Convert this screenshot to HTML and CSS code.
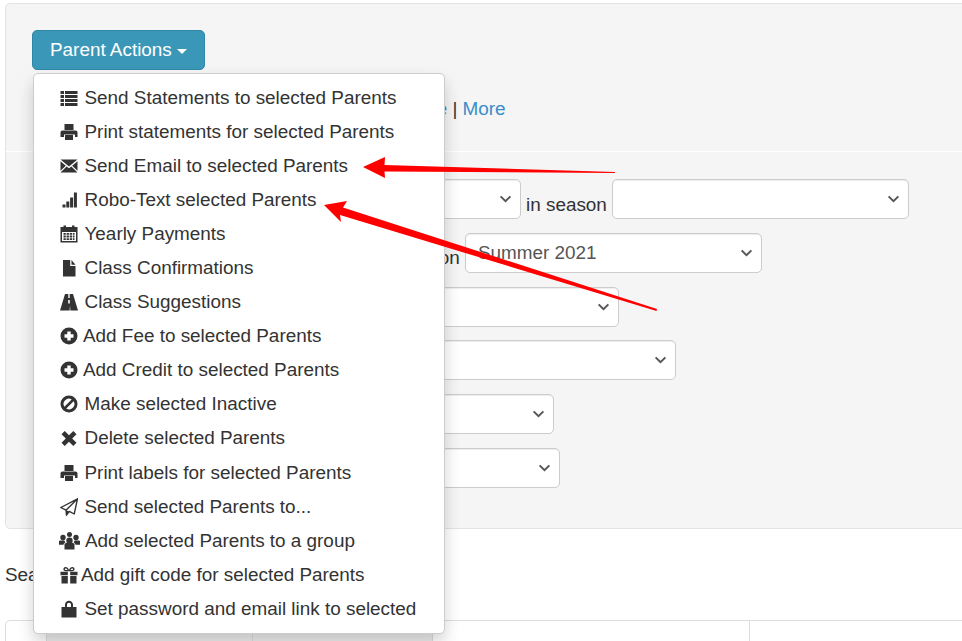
FILE: index.html
```html
<!DOCTYPE html>
<html lang="en">
<head>
  <meta charset="UTF-8" />
  <meta name="viewport" content="width=device-width, initial-scale=1.0" />
  <title>Parents</title>
  <link rel="stylesheet" href="styles.css">
</head>
<body>
  <div class="page">
    <div class="well">
      <div class="actions">
        <button class="btn-actions">Parent Actions <span class="caret"></span></button>

        <ul class="dropdown">
          <li><svg class="icon" viewBox="0 0 18 18"><path d="M.5 2h3.500v3H.5zM5 2h12.500v3H5zM.5 6h3.500v3H.5zM5 6h12.500v3H5zM.5 10h3.500v3H.5zM5 10h12.500v3H5zM.5 14h3.500v3H.5zM5 14h12.500v3H5z"/></svg>Send Statements to selected Parents</li>
          <li><svg class="icon" viewBox="0 0 18 18"><path d="M4.500 1h9v6h-9zM2.500 7.500h13c1 0 2 .8 2 2V14h-2.500v-2.500H4V14H.5V9.500c0-1.200 1-2 2-2zM5 12h8v5H5z"/></svg>Print statements for selected Parents</li>
          <li><svg class="icon" viewBox="0 0 18 18"><path d="M.5 2.500h17L9 9.500zM.5 4.200l5.300 4.500-5.300 5zM17.500 4.200l-5.300 4.500 5.300 5zM6.600 9.400 9 11.300l2.400-1.900 6.100 6H.5z"/></svg>Send Email to selected Parents</li>
          <li><svg class="icon" viewBox="0 0 18 18"><path d="M2.500 13.500h3V16.500h-3zM6.300 10.500h3v6h-3zM10.100 6.500h3v10h-3zM13.900 1.500h3v15h-3z"/></svg>Robo-Text selected Parents</li>
          <li><svg class="icon" viewBox="0 0 18 18"><path fill-rule="evenodd" d="M3.500.5h2.500V2h6V.5h2.500V2h3v15.500H.5V2h3zM2 7v9h14V7zM3.500 8h2.300v1.800H3.500zM6.600 8h2.300v1.800H6.600zM9.700 8H12v1.800H9.700zM12.800 8h1.700v1.800h-1.700zM3.500 10.600h2.300v1.800H3.500zM6.600 10.600h2.300v1.800H6.600zM9.700 10.600H12v1.800H9.700zM12.800 10.600h1.700v1.800h-1.700zM3.500 13.200h2.300V15H3.500zM6.600 13.200h2.300V15H6.600zM9.700 13.200H12V15H9.700zM12.800 13.200h1.700V15h-1.700z"/></svg>Yearly Payments</li>
          <li><svg class="icon" viewBox="0 0 18 18"><path d="M3 1h7.200v6H15.500v10.500H3zM11.500 1 15.500 5.700h-4z"/></svg>Class Confirmations</li>
          <li><svg class="icon" viewBox="0 0 18 18"><path fill-rule="evenodd" d="M5 1h3.300v4h1.400V1H13l5 16.500h-7.600l-.4-5-.4 5H0zM8.200 7h1.600v3.500H8.200z"/></svg>Class Suggestions</li>
          <li><svg class="icon icon-tight" viewBox="0 0 18 18"><path fill-rule="evenodd" d="M9 .5a8.500 8.500 0 1 1 0 17A8.500 8.500 0 0 1 9 .5zM7.300 4.500v2.800H4.500v3.400h2.800v2.800h3.400v-2.800h2.800V7.300h-2.800V4.500z"/></svg>Add Fee to selected Parents</li>
          <li><svg class="icon icon-tight" viewBox="0 0 18 18"><path fill-rule="evenodd" d="M9 .5a8.500 8.500 0 1 1 0 17A8.500 8.500 0 0 1 9 .5zM7.300 4.500v2.800H4.500v3.400h2.800v2.800h3.400v-2.800h2.800V7.300h-2.800V4.500z"/></svg>Add Credit to selected Parents</li>
          <li><svg class="icon" viewBox="0 0 18 18"><path fill-rule="evenodd" d="M9 .5a8.500 8.500 0 1 1 0 17A8.500 8.500 0 0 1 9 .5zM4.400 11.700l7.300-7.300A5.300 5.300 0 0 0 4.400 11.700zM6.300 13.600a5.300 5.300 0 0 0 7.300-7.300z"/></svg>Make selected Inactive</li>
          <li><svg class="icon" viewBox="0 0 18 18"><path d="M4.700 2 9 6.300 13.300 2l3.200 3.200L12.200 9.500l4.300 4.300-3.200 3.200L9 12.700 4.700 17l-3.200-3.200 4.300-4.300-4.300-4.300z"/></svg>Delete selected Parents</li>
          <li><svg class="icon" viewBox="0 0 18 18"><path d="M4.500 1h9v6h-9zM2.500 7.500h13c1 0 2 .8 2 2V14h-2.500v-2.500H4V14H.5V9.500c0-1.200 1-2 2-2zM5 12h8v5H5z"/></svg>Print labels for selected Parents</li>
          <li><svg class="icon" viewBox="0 0 18 18"><path fill="none" stroke="#333" stroke-width="1.400" stroke-linejoin="round" d="M17.500.8.800 9.500l5.200 2.700zM17.500.8 6 12.200l.5 5 2.800-3.800 4.900 2.600z"/><path d="M6 12.200l.5 5 2.800-3.800z"/></svg>Send selected Parents to...</li>
          <li><svg class="icon icon-wide" viewBox="0 0 21 18"><path d="M10.500 5.500a3.200 3.200 0 1 1 0 6.400 3.200 3.200 0 0 1 0-6.400zM4 2.800a2.700 2.700 0 1 1 0 5.400 2.700 2.700 0 0 1 0-5.400zM17 2.800a2.700 2.700 0 1 1 0 5.400 2.700 2.700 0 0 1 0-5.400zM10.500 0a2.500 2.500 0 1 1 0 5 2.500 2.500 0 0 1 0-5zM5.500 12.500c0-1 1-1.500 2-1.500h6c1 0 2 .5 2 1.500v5h-10zM0 9.500c0-.8.700-1 1.400-1h4.100l.8 2.300c-1 .4-1.700 1-1.700 2H0zM21 9.500c0-.8-.7-1-1.400-1h-4.100l-.8 2.300c1 .4 1.700 1 1.700 2H21z"/></svg>Add selected Parents to a group</li>
          <li><svg class="icon icon-gift" viewBox="0 0 18 18"><path fill-rule="evenodd" d="M.5 5.800h7.300v3.400H.5zM10.200 5.800h7.300v3.400h-7.300zM1.500 10h6.300v7.500H1.500zM10.200 10h6.300v7.500h-6.300zM5.500 1c1.700 0 2.800 1.300 3.500 3 .7-1.700 1.800-3 3.500-3 2.800 0 2.900 4.300-.5 4.300H6C2.600 5.300 2.700 1 5.500 1zM5.500 2.500c-1 0-1 1.400.3 1.400h1.700C7 3 6.300 2.500 5.500 2.500zM12.500 2.500c-.8 0-1.500.5-2 1.400h1.700c1.300 0 1.300-1.400.3-1.400z"/></svg>Add gift code for selected Parents</li>
          <li><svg class="icon" viewBox="0 0 18 18"><path fill-rule="evenodd" d="M9 .8c2.300 0 4 1.700 4 4V7h3.500v10.500h-15V7H5V4.800C5 2.500 6.700.8 9 .8zM9 2.800c-1.200 0-2 .8-2 2V7h4V4.800c0-1.200-.8-2-2-2z"/></svg>Set password and email link to selected</li>
        </ul>
      </div>

      <p class="links"><a href="#">None</a> | <a href="#">More</a></p>

      <form class="filters">
        <div class="filter-row">
          <select class="select-a"><option></option></select>
          <label>in season</label>
          <select class="select-season"><option></option></select>
        </div>
        <div class="filter-row row-b">
          <label>in season</label>
          <select class="select-season"><option>Summer 2021</option></select>
        </div>
        <div class="filter-row"><select class="select-c"><option></option></select></div>
        <div class="filter-row"><select class="select-d"><option></option></select></div>
        <div class="filter-row"><select class="select-e"><option></option></select></div>
        <div class="filter-row"><select class="select-f"><option></option></select></div>
      </form>
    </div>

    <p class="search-note">Search</p>

    <div class="table-head">
      <div class="cell cell-check"></div>
      <div class="cell cell-name"></div>
      <div class="cell cell-email"></div>
      <div class="cell cell-phone"></div>
      <div class="cell"></div>
    </div>

    <svg class="arrows" viewBox="0 0 962 641">
      <path fill="#f00" d="M363 167 385 157 384.500 165 615 172 615 173 384.500 171.500 385 178z"/>
      <path fill="#f00" d="M324 205 347 201 343 207.500 657 309 656.500 311 340 215 341 222z"/>
    </svg>
  </div>
</body>
</html>
```

FILE: styles.css
```css
* {
  margin: 0;
  padding: 0;
  box-sizing: border-box;
}
html,
body {
  height: 100%;
  overflow: hidden;
  background-color: #fff;
}
body {
  font-family: 'Liberation Sans', Arial, sans-serif;
  font-size: 18.9px;
  line-height: 26px;
  color: #333;
}
.page {
  position: relative;
  width: 962px;
  height: 641px;
  overflow: hidden;
}
.well {
  margin: 3px -20px 0 5px;
  height: 526px;
  padding: 26px 26px 0;
  background-color: #f5f5f5;
  border: 1px solid #e3e3e3;
  border-radius: 5px;
}
.actions {
  position: relative;
  height: 40px;
}
.btn-actions {
  height: 40px;
  padding: 0 17px;
  font: inherit;
  color: #fff;
  background-color: #3b97b8;
  border: 1px solid #2f87a6;
  border-radius: 5px;
  cursor: pointer;
}
.caret {
  display: inline-block;
  vertical-align: middle;
  border-top: 5px solid #fff;
  border-left: 5px solid transparent;
  border-right: 5px solid transparent;
}
.dropdown {
  position: absolute;
  top: 43px;
  left: 1px;
  z-index: 10;
  width: 412px;
  height: 561px;
  padding: 6.800px 0;
  list-style: none;
  background-color: #fff;
  border: 1px solid #ccc;
  border-radius: 5px;
  box-shadow: 0 8px 16px rgba(0, 0, 0, 0.18);
}
.dropdown li {
  display: flex;
  align-items: center;
  height: 34.070px;
  padding-left: 26px;
  white-space: nowrap;
}
.icon {
  flex: none;
  width: 18px;
  height: 18px;
  margin-right: 6.500px;
  fill: #333;
}
.icon-tight {
  margin-right: 5px;
}
.icon-wide {
  width: 21px;
  margin-left: -1px;
  margin-right: 5px;
}
.icon-gift {
  margin-right: 3px;
}
.links {
  height: 55px;
  margin-top: 26px;
  padding-left: 370px;
  white-space: nowrap;
}
.links a {
  color: #3a8dc8;
  text-decoration: none;
}
.filters {
  margin: 0 -26px;
  padding: 27px 26px 0;
  border-top: 1px solid #fff;
}
.filter-row {
  display: flex;
  align-items: center;
  gap: 5px;
  height: 40px;
  margin-bottom: 13.800px;
}
.filter-row label {
  padding-top: 11px;
  white-space: nowrap;
}
select {
  height: 40px;
  padding: 0 12px;
  font: inherit;
  color: #555;
  background-color: #fff;
  background-image: url("data:image/svg+xml,%3Csvg xmlns='http://www.w3.org/2000/svg' viewBox='0 0 14 9'%3E%3Cpath fill='none' stroke='%23555' stroke-width='2.200' d='M1.500 1.500 7 7l5.500-5.500'/%3E%3C/svg%3E");
  background-repeat: no-repeat;
  background-position: right 8px center;
  background-size: 13px 8px;
  border: 1px solid #ccc;
  border-radius: 5px;
  box-shadow: inset 0 1px 1px rgba(0, 0, 0, 0.075);
  appearance: none;
}
.select-a {
  width: 320px;
  margin-left: 169px;
}
.select-season {
  width: 297px;
}
.row-b label {
  margin-left: 347px;
}
.select-c {
  width: 418px;
  margin-left: 169px;
}
.select-d {
  width: 475px;
  margin-left: 169px;
}
.select-e {
  width: 353px;
  margin-left: 169px;
}
.select-f {
  width: 359px;
  margin-left: 169px;
}
.search-note {
  margin: 33px 0 0 5px;
}
.table-head {
  display: grid;
  grid-template-columns: 41px 206px 180px 317px 1fr;
  height: 30px;
  margin: 32px -10px 0 5px;
  border: 1px solid #ddd;
  border-radius: 5px 5px 0 0;
}
.cell {
  border-right: 1px solid #ddd;
}
.cell:last-child {
  border-right: none;
}
.cell-name,
.cell-email {
  background-color: #eee;
}
.arrows {
  position: absolute;
  top: 0;
  left: 0;
  z-index: 20;
  width: 962px;
  height: 641px;
  pointer-events: none;
}
```
